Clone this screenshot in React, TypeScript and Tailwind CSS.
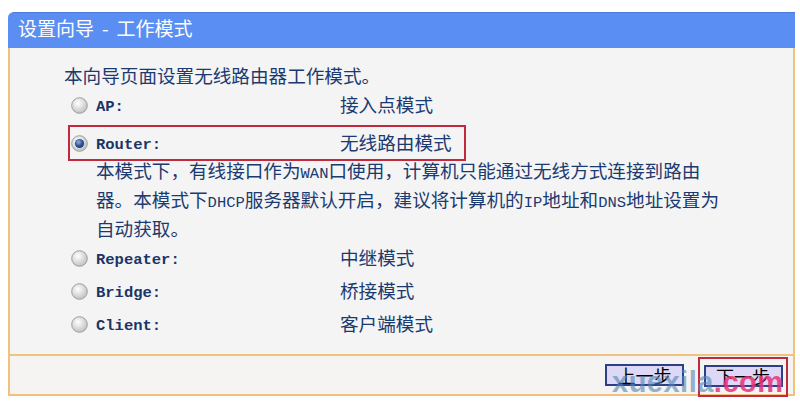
import React from "react";

const CJK = { fontFamily: "'Noto Sans CJK SC', 'Noto Sans', sans-serif" };

function Radio({ checked }: { checked?: boolean }) {
  return (
    <svg width="17" height="17" viewBox="0 0 17 17" className="shrink-0">
      <defs>
        <radialGradient id={checked ? "rgc" : "rgu"} cx="40%" cy="35%" r="70%">
          <stop offset="0%" stopColor="#ffffff" />
          <stop offset="100%" stopColor="#bdbdbd" />
        </radialGradient>
        <radialGradient id="dot" cx="40%" cy="35%" r="70%">
          <stop offset="0%" stopColor="#8fb3e0" />
          <stop offset="55%" stopColor="#2c5b9c" />
          <stop offset="100%" stopColor="#1a3a6a" />
        </radialGradient>
      </defs>
      <circle cx="8.5" cy="8.5" r="7.8" fill={`url(#${checked ? "rgc" : "rgu"})`} stroke="#9d9d9d" strokeWidth="1" />
      {checked && <circle cx="8.5" cy="8.5" r="4.6" fill="url(#dot)" />}
    </svg>
  );
}

function Row({
  label,
  mode,
  h,
  checked,
  extra,
}: {
  label: string;
  mode: string;
  h: string;
  checked?: boolean;
  extra?: string;
}) {
  return (
    <div
      className={`ml-[58px] w-[398px] box-border border-2 flex items-center pl-[1px] ${h} ${
        checked ? "border-[#c02a3c]" : "border-transparent"
      } ${extra ?? ""}`}
    >
      <Radio checked={checked} />
      <div
        className="ml-[8px] w-[244px] text-[15.5px] font-bold text-[#1b3566] leading-[17px] translate-y-[2px]"
        style={{ fontFamily: "'Liberation Mono', monospace" }}
      >
        {label}
      </div>
      <div className="text-[18.6px] text-[#1b3a70] leading-[20px] -translate-y-[1px]" style={CJK}>
        {mode}
      </div>
    </div>
  );
}

const L = ({ children }: { children: React.ReactNode }) => (
  <span className="text-[15.5px] leading-none" style={{ fontFamily: "'Liberation Mono', monospace" }}>
    {children}
  </span>
);

function Btn({ children }: { children: React.ReactNode }) {
  return (
    <div
      className="w-[79px] h-[22px] box-border border-2 border-[#2f3f86] bg-[#dcd8f6] flex items-center justify-center text-[18px] text-black leading-none"
      style={CJK}
    >
      {children}
    </div>
  );
}

export default function App() {
  return (
    <div className="relative w-[800px] h-[404px] bg-white pt-[12px] pl-[8px] pr-[5px] overflow-hidden">
      <div className="h-[36px] bg-[#5b8ef2] border-t border-[#4d7bd9] rounded-tl-[6px] flex items-start pl-[10px] pt-[3px]">
        <span className="text-white text-[19px] leading-[24px]" style={CJK}>
          设置向导<span className="mx-[8px]">-</span>工作模式
        </span>
      </div>
      <div className="border-x-2 border-b-2 border-[#f0c27e] bg-[#f4f4f4] flex flex-col">
        <div className="h-[306px] pt-[12px] flex flex-col" style={CJK}>
          <div className="ml-[54px] h-[30px] leading-[30px] text-[18.6px] text-[#1b3a70]">
            本向导页面设置无线路由器工作模式。
          </div>
          <Row label="AP:" mode="接入点模式" h="h-[30px]" />
          <Row label="Router:" mode="无线路由模式" h="h-[36px]" checked extra="mt-[5px]" />
          <div className="ml-[86px] -mt-[6px] text-[18.6px] text-[#1b3a70]">
            <div className="h-[29px] leading-[29px]">
              本模式下，有线接口作为<L>WAN</L>口使用，计算机只能通过无线方式连接到路由
            </div>
            <div className="h-[29px] leading-[29px]">
              器。本模式下<L>DHCP</L>服务器默认开启，建议将计算机的<L>IP</L>地址和<L>DNS</L>地址设置为
            </div>
            <div className="h-[29px] leading-[29px]">自动获取。</div>
          </div>
          <Row label="Repeater:" mode="中继模式" h="h-[32px]" />
          <Row label="Bridge:" mode="桥接模式" h="h-[34px]" />
          <Row label="Client:" mode="客户端模式" h="h-[32px]" />
        </div>
        <div className="h-[40px] border-t-2 border-[#f0c27e] bg-[#f6f3f3] flex items-start justify-end pr-[5px] pt-[1px]">
          <div className="mt-[7px]">
            <Btn>上一步</Btn>
          </div>
          <div className="ml-[14px] w-[90px] h-[40px] box-border border-2 border-[#c02a3c] flex items-center justify-center pb-[3px]">
            <Btn>下一步</Btn>
          </div>
        </div>
      </div>
      <div
        className="absolute left-[612px] top-[368px] text-[29px] font-bold leading-none pointer-events-none tracking-[0.5px]"
        style={{ fontFamily: "'Liberation Sans', Arial, sans-serif" }}
      >
        <span className="text-[#4f86b8] opacity-60">xuexila</span>
        <span className="text-[#e5337c] opacity-85">.com</span>
      </div>
    </div>
  );
}
